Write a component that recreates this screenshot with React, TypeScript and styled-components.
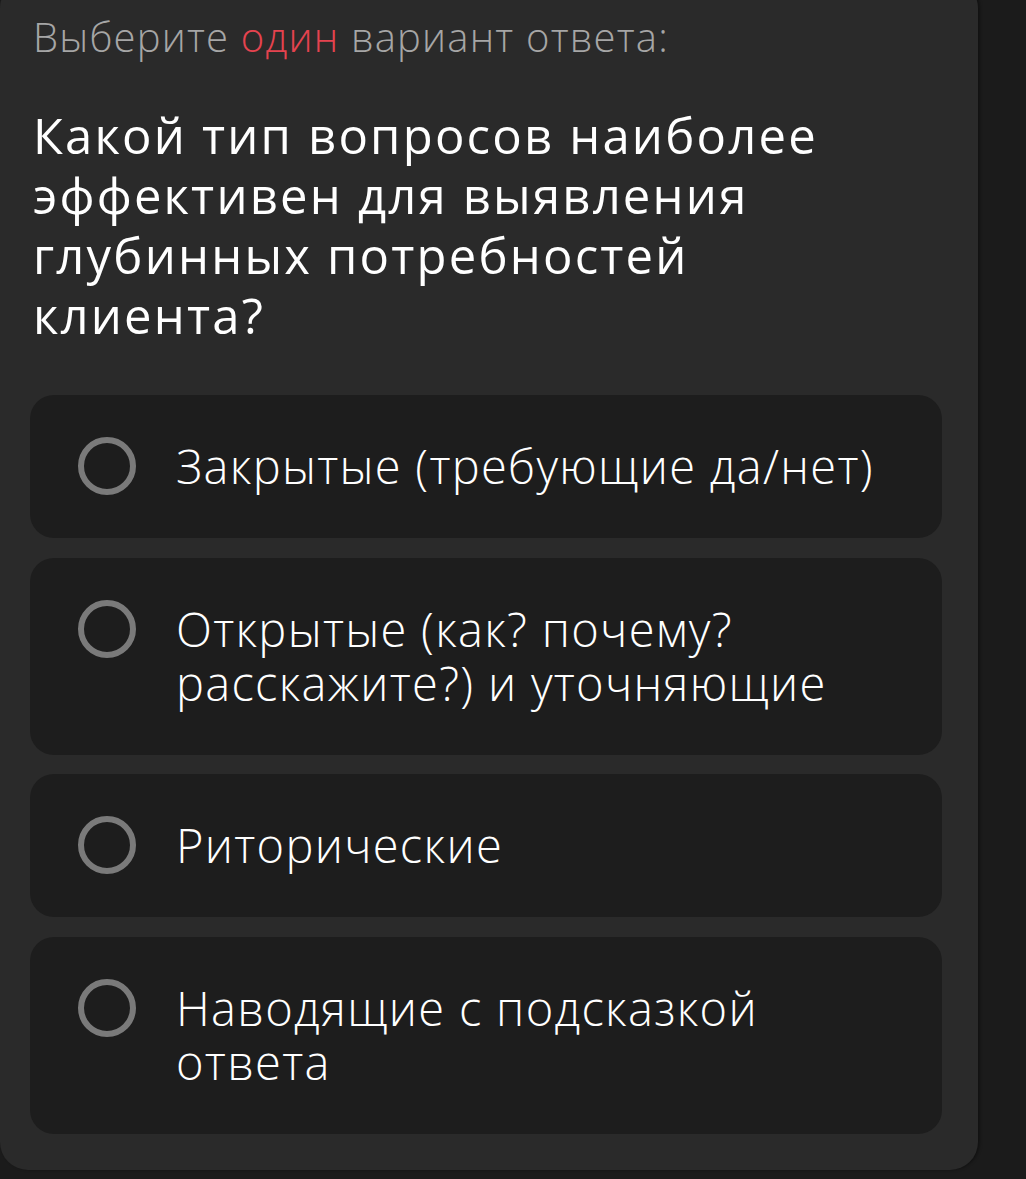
import React from "react";
import styled, { createGlobalStyle } from "styled-components";

const GlobalStyle = createGlobalStyle`
  html, body {
    margin: 0;
    padding: 0;
    background: #1b1b1b;
  }
  body {
    font-family: "Open Sans", "Noto Sans", sans-serif;
    -webkit-font-smoothing: antialiased;
  }
`;

const options = [
  "Закрытые (требующие да/нет)",
  "Открытые (как? почему? расскажите?) и уточняющие",
  "Риторические",
  "Наводящие с подсказкой ответа",
];

function App() {
  return (
    <Page>
      <GlobalStyle />
      <Card>
        <Hint>
          Выберите <span className="accent">один</span> вариант ответа:
        </Hint>
        <Question>
          Какой тип вопросов наиболее эффективен для выявления глубинных
          потребностей клиента?
        </Question>
        <OptionList>
          {options.map((text) => (
            <Option key={text}>
              <Radio />
              <OptionText>{text}</OptionText>
            </Option>
          ))}
        </OptionList>
      </Card>
    </Page>
  );
}

const Page = styled.div`
  min-height: 1179px;
  background: #1b1b1b;
  overflow: hidden;
`;

const Card = styled.div`
  width: 978px;
  box-sizing: border-box;
  margin-top: -20px;
  padding: 33px 36px 36px 0;
  background: #2a2a2a;
  border-radius: 28px;
  box-shadow: 2px 0 3px rgba(0, 0, 0, 0.35);
`;

const Hint = styled.div`
  padding-left: 33px;
  font-size: 40px;
  line-height: 48px;
  font-weight: 300;
  letter-spacing: 1.2px;
  color: #a6a6a6;

  .accent {
    color: #e5434f;
  }
`;

const Question = styled.h1`
  margin: 44px 0 0;
  padding-left: 33px;
  max-width: 840px;
  font-size: 49px;
  line-height: 60px;
  font-weight: 400;
  letter-spacing: 2.2px;
  color: #ffffff;
`;

const OptionList = styled.div`
  display: flex;
  flex-direction: column;
  gap: 19.5px;
  margin: 50px 0 0 30px;
`;

const Option = styled.div`
  display: flex;
  align-items: flex-start;
  gap: 40px;
  padding: 44px 40px 44px 48px;
  background: #1d1d1d;
  border-radius: 24px;
`;

const Radio = styled.span`
  flex: none;
  width: 58px;
  height: 58px;
  box-sizing: border-box;
  margin: -2px 0 -1px;
  border: 6px solid #7a7a7a;
  border-radius: 50%;
`;

const OptionText = styled.div`
  max-width: 700px;
  font-size: 47px;
  line-height: 54.5px;
  font-weight: 300;
  letter-spacing: 1.3px;
  color: #ffffff;
`;

export default App;
